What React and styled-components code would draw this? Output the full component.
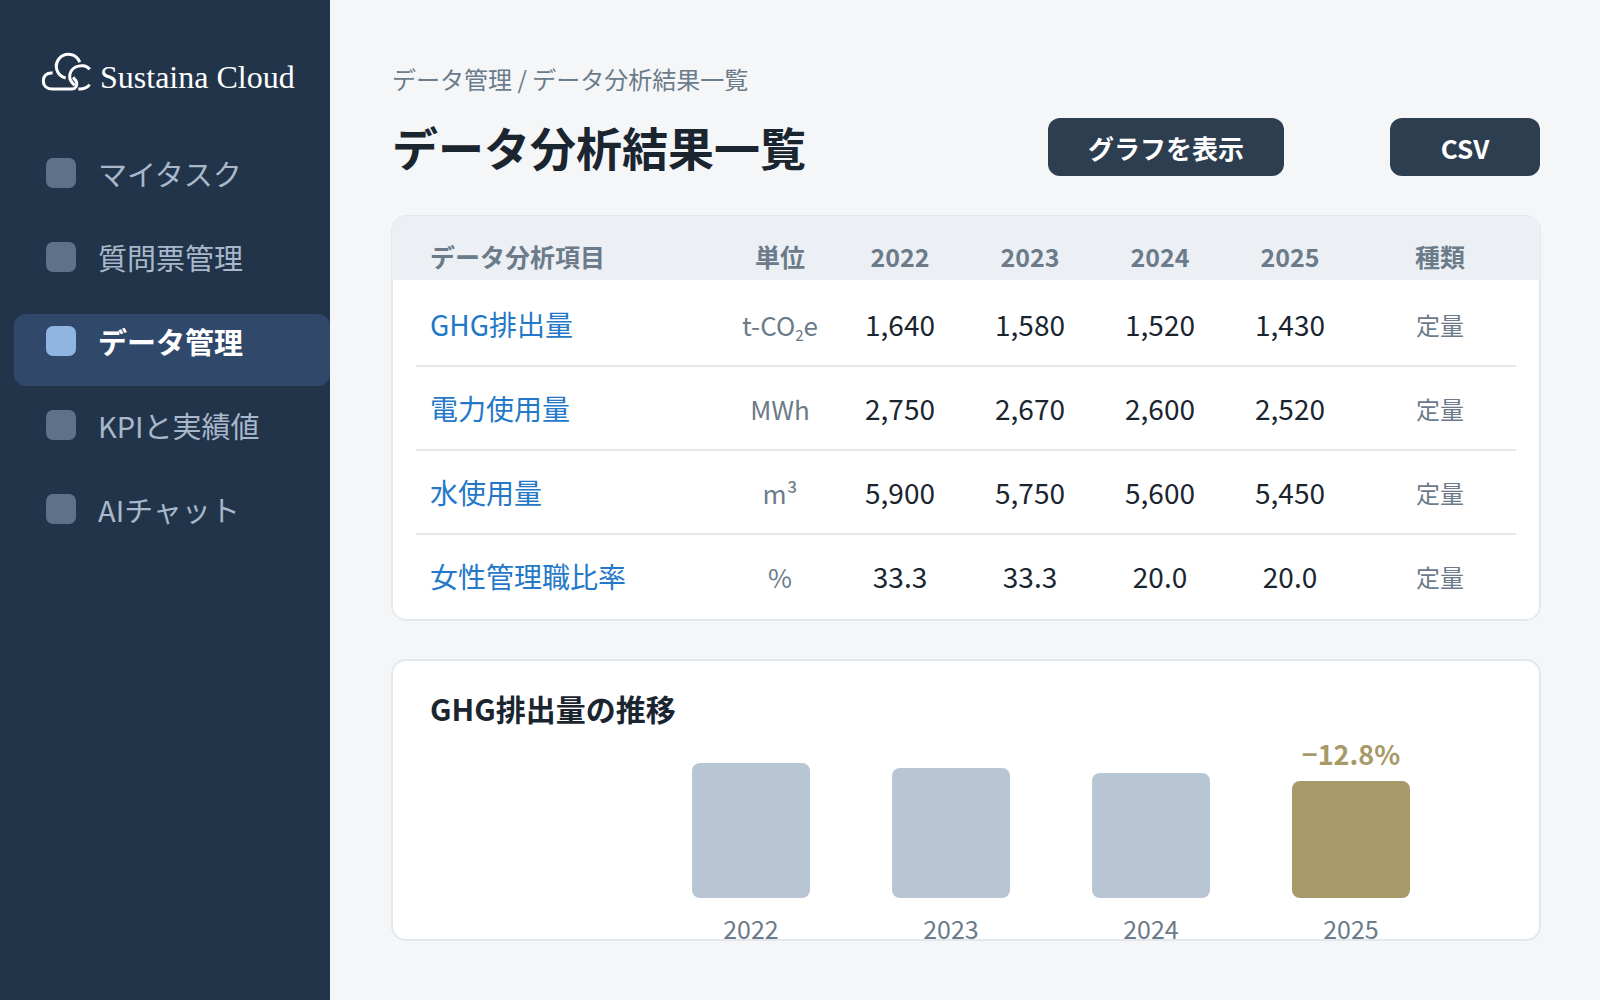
import React from 'react';
import styled, { createGlobalStyle } from 'styled-components';

const navItems = [
	{ label: 'マイタスク' },
	{ label: '質問票管理' },
	{ label: 'データ管理', active: true },
	{ label: 'KPIと実績値' },
	{ label: 'AIチャット' },
];

const years = ['2022', '2023', '2024', '2025'];

const rows = [
	{
		name: 'GHG排出量',
		unit: (
			<>
				t-CO<Sub2 />e
			</>
		),
		values: ['1,640', '1,580', '1,520', '1,430'],
		type: '定量',
	},
	{ name: '電力使用量', unit: 'MWh', values: ['2,750', '2,670', '2,600', '2,520'], type: '定量' },
	{ name: '水使用量', unit: 'm³', values: ['5,900', '5,750', '5,600', '5,450'], type: '定量' },
	{ name: '女性管理職比率', unit: '%', values: ['33.3', '33.3', '20.0', '20.0'], type: '定量' },
];

const emissions = [
	{ year: '2022', value: 1640 },
	{ year: '2023', value: 1580 },
	{ year: '2024', value: 1520 },
	{ year: '2025', value: 1430, change: '−12.8%' },
];

const BAR_MAX = 135;
const maxValue = Math.max(...emissions.map((e) => e.value));

function Sub2() {
	return <Subscript>2</Subscript>;
}

const App = () => {
	return (
		<>
			<GlobalStyle />
			<Layout>
				<Sidebar>
					<Brand href="#">
						<CloudMark />
						<BrandName>Sustaina Cloud</BrandName>
					</Brand>
					<Nav>
						{navItems.map((item) => (
							<NavLink key={item.label} href="#" $active={item.active}>
								<NavIcon $active={item.active} />
								{item.label}
							</NavLink>
						))}
					</Nav>
				</Sidebar>
				<Main>
					<Breadcrumb>データ管理 / データ分析結果一覧</Breadcrumb>
					<TitleBar>
						<Title>データ分析結果一覧</Title>
						<Actions>
							<Button $width="236px">グラフを表示</Button>
							<Button $width="150px">CSV</Button>
						</Actions>
					</TitleBar>
					<Card>
						<Table>
							<colgroup>
								<col />
								<Col $width="110px" />
								{years.map((y) => (
									<Col key={y} $width="130px" />
								))}
								<Col $width="185px" />
							</colgroup>
							<thead>
								<tr>
									<HeadCell>データ分析項目</HeadCell>
									<HeadCell>単位</HeadCell>
									{years.map((y) => (
										<HeadCell key={y}>{y}</HeadCell>
									))}
									<HeadCell>種類</HeadCell>
								</tr>
							</thead>
							<tbody>
								{rows.map((row) => (
									<TableRow key={row.name}>
										<Cell>
											<ItemLink href="#">{row.name}</ItemLink>
										</Cell>
										<MutedCell $size="26px">{row.unit}</MutedCell>
										{row.values.map((v, i) => (
											<Cell key={years[i]}>{v}</Cell>
										))}
										<MutedCell $size="24px">{row.type}</MutedCell>
									</TableRow>
								))}
							</tbody>
						</Table>
					</Card>
					<ChartCard>
						<ChartTitle>GHG排出量の推移</ChartTitle>
						<Plot>
							{emissions.map((e) => (
								<BarGroup key={e.year}>
									{e.change && <Change>{e.change}</Change>}
									<Bar
										$highlight={Boolean(e.change)}
										style={{ height: Math.floor((e.value / maxValue) * BAR_MAX) }}
									/>
									<BarLabel>{e.year}</BarLabel>
								</BarGroup>
							))}
						</Plot>
					</ChartCard>
				</Main>
			</Layout>
		</>
	);
};

const CloudMark = () => (
	<Mark viewBox="0 0 150 120" aria-hidden="true">
		<path d="M116 31 A36 36 0 1 0 74 78" />
		<path d="M35 63 C17 61 7 72 7 86 C7 102 18 111 35 111 L93 111 C104 111 109 101 107 92 C105 84 100 80 96 76" />
		<path d="M146 52 C138 40 118 38 104 45 C86 54 81 76 92 90 C95 94 98 97 101 100" />
		<path d="M112 111 C127 112 138 108 146 98" />
	</Mark>
);

export default App;

const GlobalStyle = createGlobalStyle`
	* {
		box-sizing: border-box;
	}

	body {
		margin: 0;
		background: #f4f6f8;
		color: #1a2530;
		font-family: 'Noto Sans CJK JP', sans-serif;
	}
`;

const Layout = styled.div`
	display: flex;
	min-height: 100vh;
`;

const Sidebar = styled.aside`
	flex: 0 0 330px;
	background: #22344a;
`;

const Brand = styled.a`
	display: flex;
	gap: 9px;
	padding: 52px 0 0 41px;
	color: #fff;
	text-decoration: none;
`;

const Mark = styled.svg`
	width: 50px;
	height: 40px;
	fill: none;
	stroke: #fff;
	stroke-width: 9;
`;

const BrandName = styled.span`
	font-family: 'Liberation Serif', serif;
	font-size: 32px;
	line-height: 50px;
	white-space: nowrap;
`;

const Nav = styled.nav`
	display: flex;
	flex-direction: column;
	gap: 12px;
	padding: 44px 0 0 14px;
`;

const NavLink = styled.a`
	display: flex;
	gap: 22px;
	height: 72px;
	padding: 12px 0 0 32px;
	border-radius: 12px;
	background: ${(p) => (p.$active ? '#30486a' : 'transparent')};
	color: ${(p) => (p.$active ? '#fff' : '#a8b8ca')};
	font-size: 29px;
	font-weight: ${(p) => (p.$active ? 700 : 400)};
	line-height: 30px;
	text-decoration: none;
`;

const NavIcon = styled.span`
	width: 30px;
	height: 30px;
	border-radius: 7px;
	background: ${(p) => (p.$active ? '#90b5e2' : '#5e7189')};
`;

const Main = styled.main`
	flex: 1;
	min-width: 0;
	padding: 62px 59px 59px 61px;
`;

const Breadcrumb = styled.div`
	padding-left: 1px;
	color: #6b7b8a;
	font-size: 24px;
	line-height: 34px;
`;

const TitleBar = styled.div`
	display: flex;
	justify-content: space-between;
	padding: 22px 1px 39px;
`;

const Title = styled.h1`
	margin: 0;
	font-size: 46px;
	font-weight: 700;
	line-height: 56px;
`;

const Actions = styled.div`
	display: flex;
	gap: 106px;
`;

const Button = styled.button`
	width: ${(p) => p.$width};
	height: 58px;
	padding: 0;
	border: 0;
	border-radius: 12px;
	background: #2d3e50;
	color: #fff;
	font-family: inherit;
	font-size: 26px;
	font-weight: 700;
`;

/* second pixel of the outline is an inset shadow so the table header can sit on it */
const Card = styled.section`
	overflow: hidden;
	border: 1px solid #e3e8ec;
	border-radius: 15px;
	background: #fff;
	box-shadow: inset 0 0 0 1px #e3e8ec;
`;

const Table = styled.table`
	width: 100%;
	margin-bottom: 1px;
	border-collapse: collapse;
	table-layout: fixed;
`;

const Col = styled.col`
	width: ${(p) => p.$width};
`;

const HeadCell = styled.th`
	height: 64px;
	padding: 16px 0 0;
	background: #ecf0f5;
	color: #6b7b8a;
	font-size: 25px;
	font-weight: 700;
	line-height: 40px;

	&:first-child {
		padding-left: 38px;
		text-align: left;
	}

	&:last-child {
		padding-right: 15px;
	}
`;

const Cell = styled.td`
	height: 84px;
	padding: 0 0 2px;
	font-size: 28px;
	line-height: 40px;
	text-align: center;

	&:first-child {
		padding-left: 38px;
		text-align: left;
	}

	&:last-child {
		padding-right: 15px;
	}
`;

const MutedCell = styled(Cell)`
	color: #6b7b8a;
	font-size: ${(p) => p.$size};
	line-height: 42px;
`;

const Subscript = styled.sub`
	font-size: 15px;
	line-height: 1;
	vertical-align: -5px;
`;

const TableRow = styled.tr`
	vertical-align: top;

	&:not(:last-child) {
		background: linear-gradient(#e3e8ec, #e3e8ec) center bottom / calc(100% - 48px) 2px no-repeat;
	}

	& > td {
		padding-top: 21px;
	}

	&:first-child > td {
		height: 87px;
		padding-top: 24px;
	}
`;

const ItemLink = styled.a`
	color: #2478c8;
	text-decoration: none;
`;

const ChartCard = styled.section`
	margin-top: 38px;
	border: 2px solid #e3e8ec;
	border-radius: 15px;
	background: #fff;
`;

const ChartTitle = styled.h2`
	margin: 0;
	padding: 25px 37px 0;
	font-size: 30px;
	font-weight: 700;
	line-height: 44px;
`;

const Plot = styled.div`
	display: flex;
	align-items: flex-end;
	justify-content: flex-end;
	gap: 82px;
	height: 209px;
	padding-right: 129px;
`;

const BarGroup = styled.div`
	display: flex;
	flex-direction: column;
	align-items: center;
	width: 118px;
`;

const Change = styled.span`
	color: #a89968;
	font-size: 27px;
	font-weight: 700;
	line-height: 54px;
`;

const Bar = styled.div`
	width: 100%;
	border-radius: 8px;
	background: ${(p) => (p.$highlight ? '#a89968' : '#b8c5d3')};
`;

const BarLabel = styled.span`
	padding-top: 19px;
	color: #6b7b8a;
	font-size: 25px;
	line-height: 22px;
`;
